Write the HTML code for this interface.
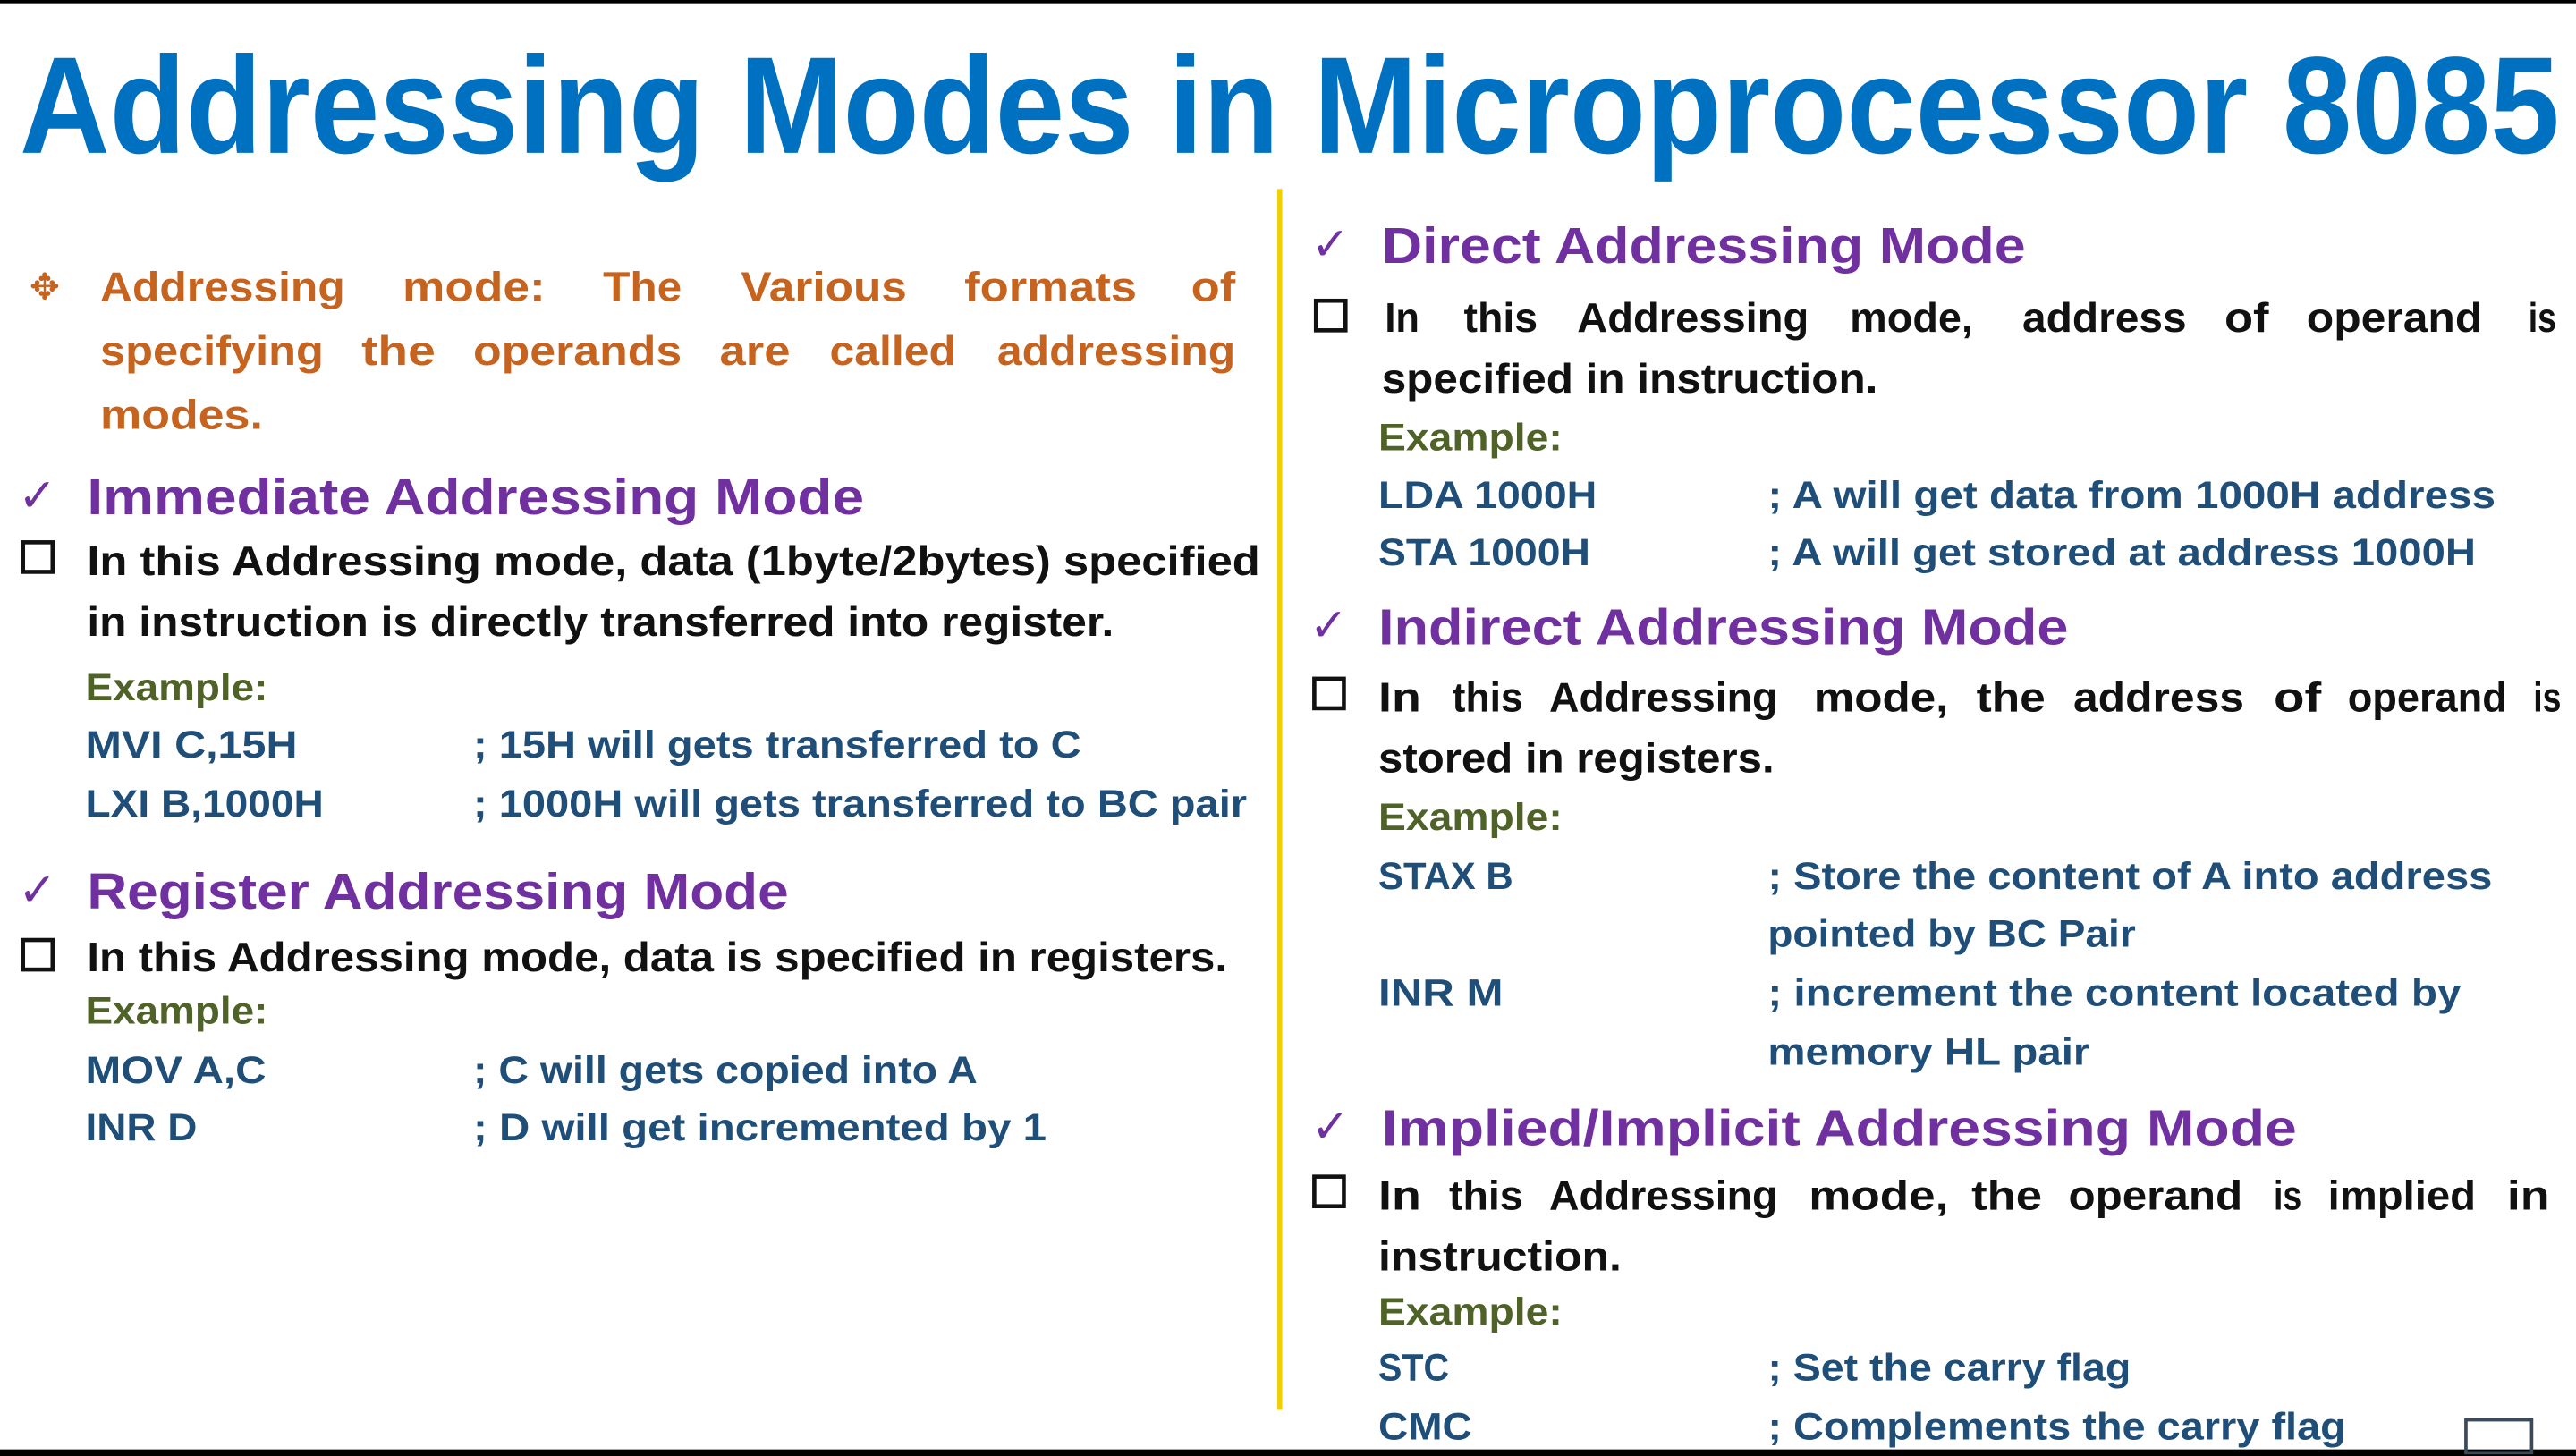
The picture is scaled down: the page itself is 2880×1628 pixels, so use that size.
<!DOCTYPE html>
<html><head><meta charset="utf-8"><style>
html,body{margin:0;padding:0;background:#fff;}
svg{display:block;}
text{font-family:"Liberation Sans",sans-serif;font-weight:bold;}
.t{fill:#0070c0;font-size:84px;}
.o{fill:#c5631f;font-size:25px;}
.h{fill:#7030a0;font-size:31px;}
.b{fill:#111;font-size:25px;}
.e{fill:#4f6228;font-size:23px;}
.c{fill:#1f4e79;font-size:23px;}
.k{fill:#7030a0;font-size:28px;font-weight:normal;}
</style></head><body>
<svg width="2880" height="1628" viewBox="0 0 1568 886" preserveAspectRatio="none" xmlns="http://www.w3.org/2000/svg">
<rect x="0" y="0" width="1568" height="886" fill="#fff"/>
<rect x="0" y="0" width="1568" height="2" fill="#000"/>
<rect x="0" y="882" width="1568" height="4" fill="#000"/>
<rect x="1501" y="864" width="40" height="20" fill="none" stroke="#3a4a5a" stroke-width="2"/>
<text class="t" x="12" y="93" textLength="1546" lengthAdjust="spacingAndGlyphs">Addressing Modes in Microprocessor 8085</text>
<line x1="779" y1="115" x2="779" y2="858" stroke="#f0d000" stroke-width="3"/>

<!-- left column -->
<text x="18" y="182" style="fill:#c5631f;font-size:22px;font-weight:normal">✥</text>
<text class="o" x="61" y="183" textLength="149" lengthAdjust="spacingAndGlyphs">Addressing</text>
<text class="o" x="245" y="183" textLength="87" lengthAdjust="spacingAndGlyphs">mode:</text>
<text class="o" x="367" y="183" textLength="48" lengthAdjust="spacingAndGlyphs">The</text>
<text class="o" x="451" y="183" textLength="101" lengthAdjust="spacingAndGlyphs">Various</text>
<text class="o" x="587" y="183" textLength="105" lengthAdjust="spacingAndGlyphs">formats</text>
<text class="o" x="725" y="183" textLength="27" lengthAdjust="spacingAndGlyphs">of</text>
<text class="o" x="61" y="222" textLength="136" lengthAdjust="spacingAndGlyphs">specifying</text>
<text class="o" x="220" y="222" textLength="45" lengthAdjust="spacingAndGlyphs">the</text>
<text class="o" x="288" y="222" textLength="127" lengthAdjust="spacingAndGlyphs">operands</text>
<text class="o" x="438" y="222" textLength="43" lengthAdjust="spacingAndGlyphs">are</text>
<text class="o" x="505" y="222" textLength="77" lengthAdjust="spacingAndGlyphs">called</text>
<text class="o" x="607" y="222" textLength="145" lengthAdjust="spacingAndGlyphs">addressing</text>
<text class="o" x="61" y="261" textLength="99" lengthAdjust="spacingAndGlyphs">modes.</text>
<text class="k" x="11" y="311">✓</text>
<text class="h" x="53" y="313" textLength="473" lengthAdjust="spacingAndGlyphs">Immediate Addressing Mode</text>
<rect x="14" y="330" width="18" height="18" fill="none" stroke="#111" stroke-width="2.5"/>
<text class="b" x="53" y="350" textLength="714" lengthAdjust="spacingAndGlyphs">In this Addressing mode, data (1byte/2bytes) specified</text>
<text class="b" x="53" y="387" textLength="625" lengthAdjust="spacingAndGlyphs">in instruction is directly transferred into register.</text>
<text class="e" x="52" y="426" textLength="111" lengthAdjust="spacingAndGlyphs">Example:</text>
<text class="c" x="52" y="461" textLength="129" lengthAdjust="spacingAndGlyphs">MVI C,15H</text>
<text class="c" x="288" y="461" textLength="370" lengthAdjust="spacingAndGlyphs">; 15H will gets transferred to C</text>
<text class="c" x="52" y="497" textLength="145" lengthAdjust="spacingAndGlyphs">LXI B,1000H</text>
<text class="c" x="288" y="497" textLength="471" lengthAdjust="spacingAndGlyphs">; 1000H will gets transferred to BC pair</text>
<text class="k" x="11" y="551">✓</text>
<text class="h" x="53" y="553" textLength="427" lengthAdjust="spacingAndGlyphs">Register Addressing Mode</text>
<rect x="14" y="572" width="18" height="18" fill="none" stroke="#111" stroke-width="2.5"/>
<text class="b" x="53" y="591" textLength="694" lengthAdjust="spacingAndGlyphs">In this Addressing mode, data is specified in registers.</text>
<text class="e" x="52" y="623" textLength="111" lengthAdjust="spacingAndGlyphs">Example:</text>
<text class="c" x="52" y="659" textLength="110" lengthAdjust="spacingAndGlyphs">MOV A,C</text>
<text class="c" x="288" y="659" textLength="307" lengthAdjust="spacingAndGlyphs">; C will gets copied into A</text>
<text class="c" x="52" y="694" textLength="68" lengthAdjust="spacingAndGlyphs">INR D</text>
<text class="c" x="288" y="694" textLength="349" lengthAdjust="spacingAndGlyphs">; D will get incremented by 1</text>

<!-- right column -->
<text class="k" x="798" y="158">✓</text>
<text class="h" x="841" y="160" textLength="392" lengthAdjust="spacingAndGlyphs">Direct Addressing Mode</text>
<rect x="801" y="183" width="18" height="18" fill="none" stroke="#111" stroke-width="2.5"/>
<text class="b" x="843" y="202" textLength="21" lengthAdjust="spacingAndGlyphs">In</text>
<text class="b" x="891" y="202" textLength="45" lengthAdjust="spacingAndGlyphs">this</text>
<text class="b" x="960" y="202" textLength="141" lengthAdjust="spacingAndGlyphs">Addressing</text>
<text class="b" x="1126" y="202" textLength="75" lengthAdjust="spacingAndGlyphs">mode,</text>
<text class="b" x="1231" y="202" textLength="100" lengthAdjust="spacingAndGlyphs">address</text>
<text class="b" x="1354" y="202" textLength="27" lengthAdjust="spacingAndGlyphs">of</text>
<text class="b" x="1404" y="202" textLength="107" lengthAdjust="spacingAndGlyphs">operand</text>
<text class="b" x="1539" y="202" textLength="17" lengthAdjust="spacingAndGlyphs">is</text>
<text class="b" x="841" y="239" textLength="302" lengthAdjust="spacingAndGlyphs">specified in instruction.</text>
<text class="e" x="839" y="274" textLength="112" lengthAdjust="spacingAndGlyphs">Example:</text>
<text class="c" x="839" y="309" textLength="133" lengthAdjust="spacingAndGlyphs">LDA 1000H</text>
<text class="c" x="1076" y="309" textLength="443" lengthAdjust="spacingAndGlyphs">; A will get data from 1000H address</text>
<text class="c" x="839" y="344" textLength="129" lengthAdjust="spacingAndGlyphs">STA 1000H</text>
<text class="c" x="1076" y="344" textLength="431" lengthAdjust="spacingAndGlyphs">; A will get stored at address 1000H</text>
<text class="k" x="797" y="390">✓</text>
<text class="h" x="839" y="392" textLength="420" lengthAdjust="spacingAndGlyphs">Indirect Addressing Mode</text>
<rect x="800" y="413" width="18" height="18" fill="none" stroke="#111" stroke-width="2.5"/>
<text class="b" x="839" y="433" textLength="26" lengthAdjust="spacingAndGlyphs">In</text>
<text class="b" x="884" y="433" textLength="43" lengthAdjust="spacingAndGlyphs">this</text>
<text class="b" x="943" y="433" textLength="139" lengthAdjust="spacingAndGlyphs">Addressing</text>
<text class="b" x="1104" y="433" textLength="82" lengthAdjust="spacingAndGlyphs">mode,</text>
<text class="b" x="1203" y="433" textLength="42" lengthAdjust="spacingAndGlyphs">the</text>
<text class="b" x="1262" y="433" textLength="104" lengthAdjust="spacingAndGlyphs">address</text>
<text class="b" x="1384" y="433" textLength="29" lengthAdjust="spacingAndGlyphs">of</text>
<text class="b" x="1429" y="433" textLength="97" lengthAdjust="spacingAndGlyphs">operand</text>
<text class="b" x="1542" y="433" textLength="17" lengthAdjust="spacingAndGlyphs">is</text>
<text class="b" x="839" y="470" textLength="241" lengthAdjust="spacingAndGlyphs">stored in registers.</text>
<text class="e" x="839" y="505" textLength="112" lengthAdjust="spacingAndGlyphs">Example:</text>
<text class="c" x="839" y="541" textLength="82" lengthAdjust="spacingAndGlyphs">STAX B</text>
<text class="c" x="1076" y="541" textLength="441" lengthAdjust="spacingAndGlyphs">; Store the content of A into address</text>
<text class="c" x="1076" y="576" textLength="224" lengthAdjust="spacingAndGlyphs">pointed by BC Pair</text>
<text class="c" x="839" y="612" textLength="76" lengthAdjust="spacingAndGlyphs">INR M</text>
<text class="c" x="1076" y="612" textLength="422" lengthAdjust="spacingAndGlyphs">; increment the content located by</text>
<text class="c" x="1076" y="648" textLength="196" lengthAdjust="spacingAndGlyphs">memory HL pair</text>
<text class="k" x="798" y="695">✓</text>
<text class="h" x="841" y="697" textLength="557" lengthAdjust="spacingAndGlyphs">Implied/Implicit Addressing Mode</text>
<rect x="800" y="716" width="18" height="18" fill="none" stroke="#111" stroke-width="2.5"/>
<text class="b" x="839" y="736" textLength="26" lengthAdjust="spacingAndGlyphs">In</text>
<text class="b" x="882" y="736" textLength="45" lengthAdjust="spacingAndGlyphs">this</text>
<text class="b" x="943" y="736" textLength="139" lengthAdjust="spacingAndGlyphs">Addressing</text>
<text class="b" x="1101" y="736" textLength="85" lengthAdjust="spacingAndGlyphs">mode,</text>
<text class="b" x="1200" y="736" textLength="43" lengthAdjust="spacingAndGlyphs">the</text>
<text class="b" x="1259" y="736" textLength="106" lengthAdjust="spacingAndGlyphs">operand</text>
<text class="b" x="1384" y="736" textLength="17" lengthAdjust="spacingAndGlyphs">is</text>
<text class="b" x="1417" y="736" textLength="90" lengthAdjust="spacingAndGlyphs">implied</text>
<text class="b" x="1526" y="736" textLength="26" lengthAdjust="spacingAndGlyphs">in</text>
<text class="b" x="839" y="773" textLength="148" lengthAdjust="spacingAndGlyphs">instruction.</text>
<text class="e" x="839" y="806" textLength="112" lengthAdjust="spacingAndGlyphs">Example:</text>
<text class="c" x="839" y="840" textLength="43" lengthAdjust="spacingAndGlyphs">STC</text>
<text class="c" x="1076" y="840" textLength="221" lengthAdjust="spacingAndGlyphs">; Set the carry flag</text>
<text class="c" x="839" y="876" textLength="57" lengthAdjust="spacingAndGlyphs">CMC</text>
<text class="c" x="1076" y="876" textLength="352" lengthAdjust="spacingAndGlyphs">; Complements the carry flag</text>
</svg>
</body></html>
